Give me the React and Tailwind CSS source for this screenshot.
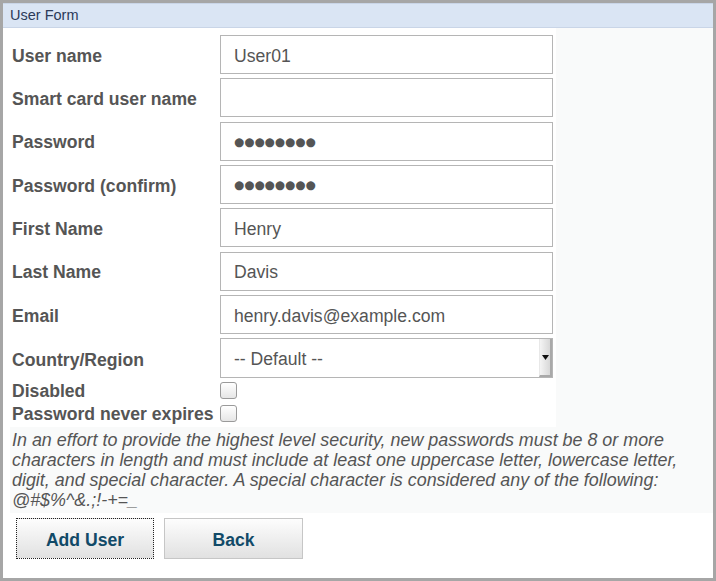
import React from 'react';

const fields = [
  { label: 'User name', value: 'User01' },
  { label: 'Smart card user name', value: '' },
  { label: 'Password', value: '●●●●●●●●', secret: true },
  { label: 'Password (confirm)', value: '●●●●●●●●', secret: true },
  { label: 'First Name', value: 'Henry' },
  { label: 'Last Name', value: 'Davis' },
  { label: 'Email', value: 'henry.davis@example.com' },
];

const TextBox = ({ value, secret }) => (
  <div className="w-[333px] h-[39px] border border-[#b5b5b5] bg-white pl-[13px] pt-[3px] flex items-center text-[#555]">
    {secret ? (
      <span className="text-[11.7px] font-['DejaVu_Sans',sans-serif]">{value}</span>
    ) : (
      <span className="text-[17.6px]">{value}</span>
    )}
  </div>
);

const CheckBox = () => (
  <div className="w-[17px] h-[17px] rounded-[3px] border border-[#9a9a9a] bg-gradient-to-b from-white to-[#e6e6e6]" />
);

const App = () => {
  return (
    <div className="w-[716px] h-[581px] border-[3px] border-[#a6a6a6] bg-white flex flex-col font-['Liberation_Sans',Arial,sans-serif]">
      {/* Header */}
      <div className="h-[25px] bg-[#dae5f4] border-t border-b border-[#c9d5e7] pl-[7px] flex items-center text-[14.5px] text-[#2b3a58]">
        User Form
      </div>

      {/* Form table */}
      <div className="flex">
        <div className="w-[553px] bg-white pl-[9px] pt-[7px] pb-[2px]">
          {fields.map((f) => (
            <div key={f.label} className="flex items-center h-[39px] mb-[4.33px]">
              <div className="w-[208px] pt-[3px] text-[17.6px] font-bold text-[#555]">{f.label}</div>
              <TextBox value={f.value} secret={f.secret} />
            </div>
          ))}

          <div className="flex items-center h-[40px] mb-[1px]">
            <div className="w-[208px] pt-[3px] text-[17.6px] font-bold text-[#555]">Country/Region</div>
            <div className="w-[333px] h-[40px] border border-[#b5b5b5] bg-white flex items-stretch text-[#555]">
              <div className="flex-1 pl-[13px] pt-[2px] flex items-center text-[17.6px]">-- Default --</div>
              <div className="w-[13px] bg-gradient-to-r from-[#f4f4f4] to-[#d8d8d8] border-l border-[#e8e8e8] border-r-2 border-b-2 border-r-[#a9a9a9] border-b-[#a9a9a9] flex items-center justify-center">
                <svg width="7" height="5" viewBox="0 0 7 5">
                  <path d="M0 0 L7 0 L3.5 5 Z" fill="#111" />
                </svg>
              </div>
            </div>
          </div>

          <div className="flex items-center h-[23px]">
            <div className="w-[208px] text-[17.6px] font-bold text-[#555]">Disabled</div>
            <CheckBox />
          </div>
          <div className="flex items-center h-[23px]">
            <div className="w-[208px] text-[17.6px] font-bold text-[#555] whitespace-nowrap">Password never expires</div>
            <CheckBox />
          </div>
        </div>
        <div className="flex-1 bg-[#f9fafa]" />
      </div>

      {/* Password policy note */}
      <div className="ml-[7px] bg-[#f9fafa] px-[2px] pt-[3px] pb-[3px] text-[17.9px] leading-[20px] italic text-[#555]">
        In an effort to provide the highest level security, new passwords must be 8 or more characters in length and must include at least one uppercase letter, lowercase letter, digit, and special character. A special character is considered any of the following: <span className="whitespace-nowrap">@#$%^&amp;.;!-+=_</span>
      </div>

      {/* Actions */}
      <div className="flex gap-[10px] pl-[13px] mt-[5px]">
        <button className="w-[138px] h-[41px] pt-[2px] border border-dotted border-[#222] bg-gradient-to-b from-[#fdfdfd] to-[#e1e1e1] text-[17.6px] font-bold text-[#114a68]">
          Add User
        </button>
        <button className="w-[139px] h-[41px] pt-[2px] border border-[#c6c6c6] bg-gradient-to-b from-[#fdfdfd] to-[#e1e1e1] text-[17.6px] font-bold text-[#114a68]">
          Back
        </button>
      </div>
    </div>
  );
};

export default App;
